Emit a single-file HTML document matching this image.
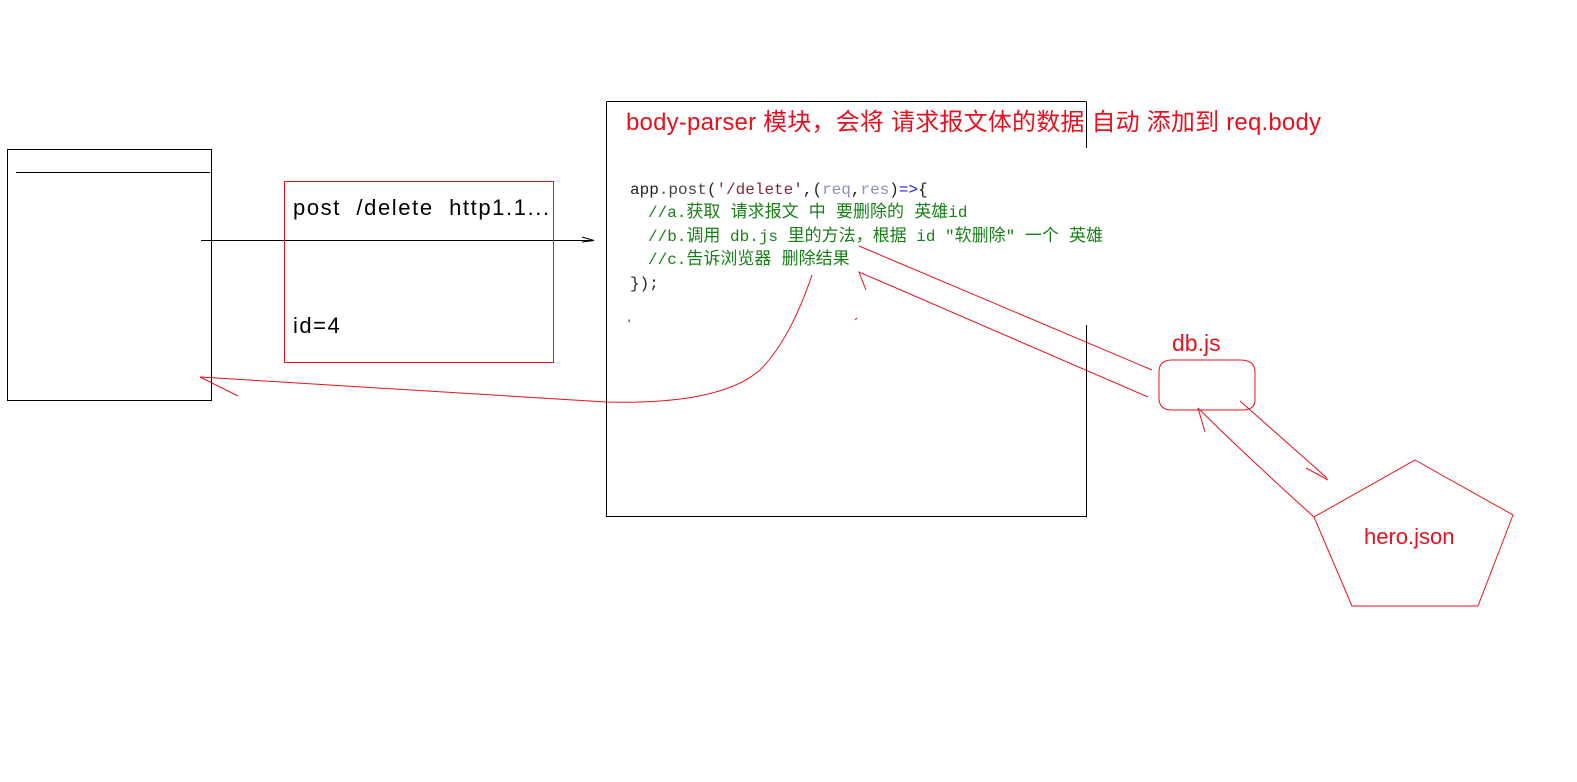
<!DOCTYPE html>
<html><head><meta charset="utf-8"><style>
body{margin:0;width:1577px;height:782px;background:#fff;overflow:hidden;position:relative;font-family:"Liberation Sans","Noto Sans CJK SC",sans-serif}
.t{position:absolute;white-space:pre;line-height:1}
.code{font-family:"Liberation Mono","Noto Sans CJK SC",monospace;font-size:16px}
.c{font-size:17px}
</style></head><body>
<svg width="1577" height="782" style="position:absolute;left:0;top:0">
<g fill="none" stroke="#000" stroke-width="1">
<rect x="7.5" y="149.5" width="204" height="251"/>
<line x1="16" y1="172.5" x2="210" y2="172.5"/>
<line x1="201" y1="240.5" x2="594" y2="240.5"/>
<path d="M582 237 L594 240.5 L582 242"/>
<path d="M606.5 102 V516.5 H1086.5 V325 M1086.5 102 V148 M606.5 101.5 H1086.5"/>
</g>
<g fill="none" stroke="#e8101e" stroke-width="1">
<rect x="284.5" y="181.5" width="269" height="181"/>
<path d="M1172 360 H1240 Q1255 360 1255 372 V400 Q1255 410 1242 410 H1172 Q1159 410 1159 398 V372 Q1159 360 1172 360 Z"/>
<path d="M1415 460 L1513 515 L1478 606 L1352 606 L1314 517 Z"/>
<path d="M1314 517 Q1240 450 1198 408 L1205 432"/>
<path d="M1240 401 L1327 478 M1306 468 L1328 480"/>
<path d="M1152 370 L859 246"/>
<path d="M1148 397 L859 272 L866 290"/>
<path d="M812 275 Q790 340 760 370 Q720 405 606 402 L200 377 L238 396"/>
<path d="M855 320 L857 318"/>
</g>
</svg>
<div class="t" style="left:626px;top:111px;font-size:24px;letter-spacing:0.2px;color:#e8101e">body-parser 模块，会将 请求报文体的数据 自动 添加到 req.body</div>
<div class="t" style="left:293px;top:197px;font-size:22px;letter-spacing:1.6px;color:#000">post  /delete  http1.1...</div>
<div class="t" style="left:293px;top:315px;font-size:22px;letter-spacing:1.5px;color:#000">id=4</div>
<div class="t" style="left:1172px;top:332px;font-size:23px;color:#e8101e">db.js</div>
<div class="t" style="left:1364px;top:526px;font-size:22px;color:#e8101e">hero.json</div>
<div class="t code" style="left:630px;top:182px;color:#222">app<span style="color:#555">.</span><span style="color:#444">post</span>(<span style="color:#7a2a3a">'/delete'</span>,(<span style="color:#8a90c0">req</span>,<span style="color:#8a90c0">res</span>)<span style="color:#2020e0">=&gt;</span>{</div>
<div class="t code" style="left:648px;top:205px;color:#178017">//a.<span class="c">获取 请求报文 中 要删除的 英雄</span>id</div>
<div class="t code" style="left:648px;top:229px;color:#178017">//b.<span class="c">调用</span> db.js <span class="c">里的方法，根据</span> id "<span class="c">软删除</span>" <span class="c">一个 英雄</span></div>
<div class="t code" style="left:648px;top:252px;color:#178017">//c.<span class="c">告诉浏览器 删除结果</span></div>
<div class="t code" style="left:630px;top:276px;color:#222">});</div>
<div class="t" style="left:628px;top:318px;font-size:12px;color:#000">'</div>
</body></html>
